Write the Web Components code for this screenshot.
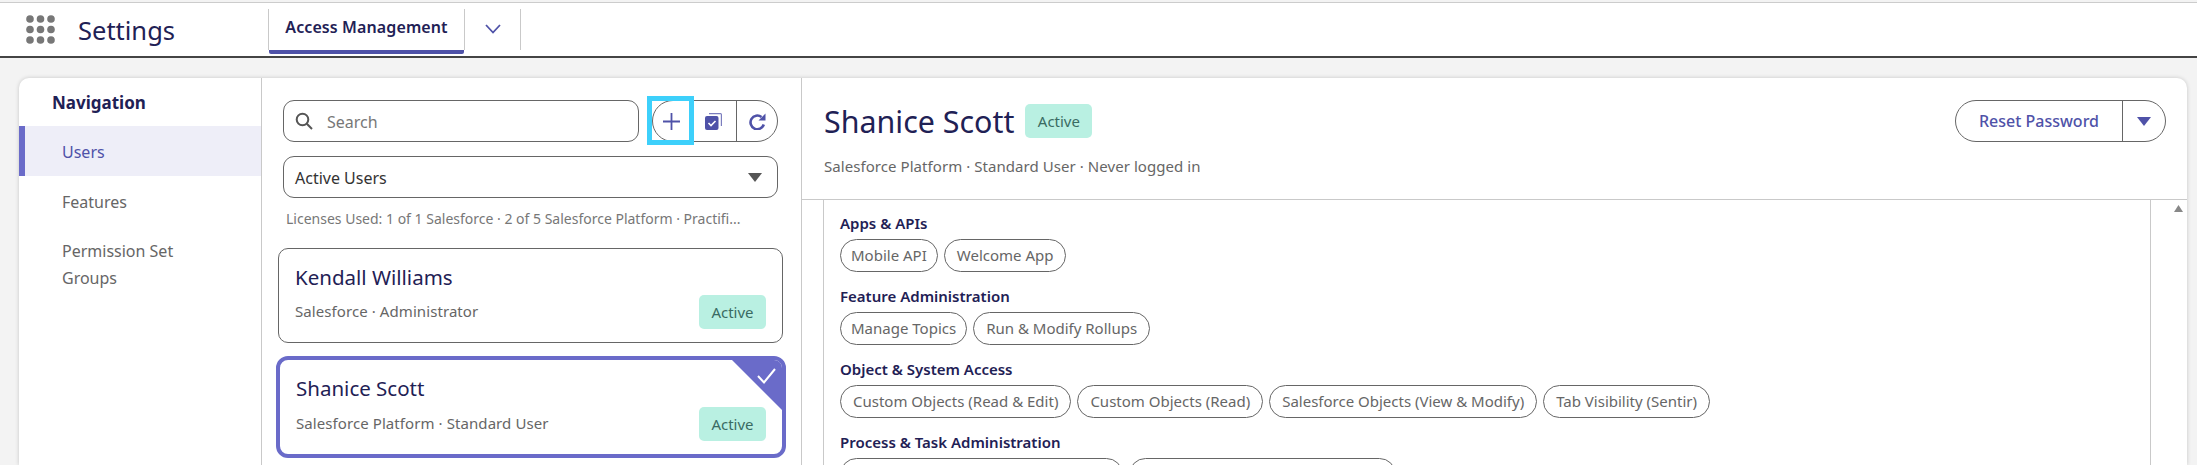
<!DOCTYPE html>
<html>
<head>
<meta charset="utf-8">
<title>Settings</title>
<style>
  html, body { margin: 0; height: 100%; overflow: hidden; }
  body { background: #f3f3f3; font-family: "Noto Sans", sans-serif; color: #1f2155; }
  main { display: flex; height: 387px; margin: 20px 10px 0 19px; background: #fff; border-radius: 10px 10px 0 0; box-shadow: 0 0 4px rgba(0,0,0,.18); overflow: hidden; }
</style>
</head>
<body>
<app-header></app-header>
<main>
  <nav-panel></nav-panel>
  <user-list></user-list>
  <user-detail></user-detail>
</main>

<script>
  const accent = '#4f52a8';

  class AppHeader extends HTMLElement {
    constructor() {
      super();
      this.attachShadow({ mode: 'open' });
      const dots = [];
      for (let r = 0; r < 3; r++) {
        for (let c = 0; c < 3; c++) {
          dots.push(`<circle cx="${4 + c * 10.5}" cy="${4 + r * 10.5}" r="3.8"/>`);
        }
      }
      this.shadowRoot.innerHTML = `
        <style>
          :host { display: flex; height: 53px; margin-top: 2px; align-items: stretch; background: #fff; border-top: 1px solid #ccc; border-bottom: 2px solid #444; box-sizing: content-box; }
          .apps { width: 29px; height: 29px; margin: 12px 0 0 26px; fill: #777; flex: none; }
          .title { margin-left: 23px; width: 95px; font-size: 25.5px; line-height: 55px; color: #1f2155; flex: none; }
          .tabs { display: flex; margin-left: 95px; height: 41px; margin-top: 6px; }
          .tab { width: 197px; box-sizing: border-box; border-left: 1px solid #c9c9c9; border-right: 1px solid #c9c9c9; font-size: 16px; font-weight: 600; letter-spacing: .1px; line-height: 36px; text-align: center; position: relative; }
          .tab::after { content: ''; position: absolute; left: 0; right: 0; bottom: -4px; height: 4px; background: ${accent}; border-radius: 0 0 2px 2px; }
          .more { width: 56px; border-right: 1px solid #c9c9c9; display: flex; align-items: center; justify-content: center; padding-bottom: 1px; box-sizing: border-box; }
        </style>
        <svg class="apps" viewBox="0 0 29 29">${dots.join('')}</svg>
        <div class="title">Settings</div>
        <div class="tabs">
          <div class="tab">Access Management</div>
          <div class="more">
            <svg width="16" height="10" viewBox="0 0 16 10" fill="none" stroke="${accent}" stroke-width="1.8"><path d="M1 1l7 7.5L15 1"/></svg>
          </div>
        </div>
      `;
    }
  }
  customElements.define('app-header', AppHeader);

  class NavPanel extends HTMLElement {
    constructor() {
      super();
      this.attachShadow({ mode: 'open' });
      this.shadowRoot.innerHTML = `
        <style>
          :host { display: block; width: 243px; flex: none; border-right: 1px solid #c9c9c9; box-sizing: border-box; }
          h2 { margin: 0; padding: 13px 0 0 33px; height: 48px; box-sizing: border-box; font-size: 17px; font-weight: 700; line-height: 24px; color: #1f2155; }
          .item { padding: 13px 40px 0 43px; height: 50px; box-sizing: border-box; font-size: 16px; line-height: 27px; color: #666; }
          .item.on { background: #eeeef8; border-left: 6px solid #6a6bc9; padding-left: 37px; color: ${accent}; }
          .item.wide { height: auto; padding-top: 12px; }
        </style>
        <h2>Navigation</h2>
        <div class="item on">Users</div>
        <div class="item">Features</div>
        <div class="item wide">Permission Set Groups</div>
      `;
    }
  }
  customElements.define('nav-panel', NavPanel);

  class StatusBadge extends HTMLElement {
    constructor() {
      super();
      this.attachShadow({ mode: 'open' });
      this.shadowRoot.innerHTML = `
        <style>
          :host { display: block; width: 67px; height: 34px; border-radius: 5px; background: #b9f0e2; color: #3a6b63; font-size: 15px; line-height: 34px; text-align: center; }
        </style>
        <slot></slot>
      `;
    }
  }
  customElements.define('status-badge', StatusBadge);

  class UserCard extends HTMLElement {
    constructor() {
      super();
      this.attachShadow({ mode: 'open' });
      this.shadowRoot.innerHTML = `
        <style>
          :host { display: block; position: relative; height: 95px; margin: 0 -5px; box-sizing: border-box; border: 1px solid #666; border-radius: 10px; padding: 14px 16px 0 16px; overflow: hidden; background: #fff; }
          :host([selected]) { height: 102px; margin: 13px -8px 0 -7px; border: 4px solid #6a6bc9; border-radius: 12px; padding: 14px 16px 0 16px; }
          .name { font-size: 20.5px; line-height: 29px; color: #1f2155; }
          .sub { margin-top: 9px; font-size: 15px; letter-spacing: .08px; line-height: 20px; color: #666; }
          :host([selected]) .sub { margin-top: 10px; }
          status-badge { position: absolute; right: 16px; bottom: 13px; }
          .corner { display: none; position: absolute; top: 0; right: 0; width: 50px; height: 50px; }
          :host([selected]) .corner { display: block; }
        </style>
        <div class="name"><slot name="name"></slot></div>
        <div class="sub"><slot name="sub"></slot></div>
        <status-badge>Active</status-badge>
        <svg class="corner" viewBox="0 0 50 50">
          <path d="M0 0H50V50Z" fill="#6a6bc9"/>
          <path d="M26 16l6 6.5L43 9" fill="none" stroke="#fff" stroke-width="2"/>
        </svg>
      `;
    }
  }
  customElements.define('user-card', UserCard);

  class UserList extends HTMLElement {
    constructor() {
      super();
      this.attachShadow({ mode: 'open' });
      this.shadowRoot.innerHTML = `
        <style>
          :host { display: block; width: 540px; flex: none; padding: 22px 23px 0 21px; box-sizing: border-box; border-right: 1px solid #c9c9c9; }
          .top { display: flex; gap: 13px; height: 42px; }
          .field { box-sizing: border-box; height: 42px; border: 1px solid #666; border-radius: 11px; display: flex; align-items: center; font-size: 16px; color: #333; }
          .field span { padding-top: 2px; }
          .search { width: 356px; flex: none; padding-left: 11px; color: #777; gap: 14px; }
          .group { display: flex; flex: 1; height: 42px; box-sizing: border-box; border: 1px solid #666; border-radius: 21px; }
          .group > div { display: flex; align-items: center; justify-content: center; position: relative; }
          .add { width: 37px; }
          .copy { width: 46px; }
          .refresh { flex: 1; border-left: 1px solid #666; }
          .highlight { position: absolute; left: -6px; top: -5px; width: 47px; height: 49px; box-sizing: border-box; border: 5px solid #3dd0fb; }
          .select { margin-top: 14px; padding: 0 15px 0 11px; justify-content: space-between; }
          .licenses { margin: 11px -8px 19px 3px; font-size: 14px; line-height: 20px; color: #777; white-space: nowrap; }
        </style>
        <div class="top">
          <div class="field search">
            <svg width="18" height="18" viewBox="0 0 18 18" fill="none" stroke="#555" stroke-width="2"><circle cx="7.5" cy="7.5" r="5.8"/><path d="M11.8 11.8L17 17"/></svg>
            <span>Search</span>
          </div>
          <div class="group">
            <div class="add">
              <svg width="17" height="17" viewBox="0 0 17 17" stroke="${accent}" stroke-width="1.8"><path d="M8.5 0v17M0 8.5h17"/></svg>
              <div class="highlight"></div>
            </div>
            <div class="copy">
              <svg width="17" height="18" viewBox="0 0 17 18"><path d="M4 2.5V1h11.5A1.5 1.5 0 0 1 17 2.5V14h-1.2V2.2H4z" fill="${accent}" opacity=".75"/><rect x="0" y="4" width="13.5" height="14" rx="2" fill="${accent}"/><path d="M3.5 11l2.5 2.5 4.5-4.5" fill="none" stroke="#fff" stroke-width="1.6"/></svg>
            </div>
            <div class="refresh">
              <svg width="17" height="18" viewBox="0 0 17 18" fill="none" stroke="${accent}" stroke-width="2.6"><path d="M14.8 12.5A6.8 6.8 0 1 1 12.5 5"/><path d="M9.5 8.5h7V1.5z" fill="${accent}" stroke="none"/></svg>
            </div>
          </div>
        </div>
        <div class="field select">
          <span>Active Users</span>
          <svg width="14" height="9" viewBox="0 0 14 9"><path d="M0 0h14L7 9z" fill="#555"/></svg>
        </div>
        <div class="licenses">Licenses Used: 1 of 1 Salesforce · 2 of 5 Salesforce Platform · Practifi...</div>
        <user-card>
          <span slot="name">Kendall Williams</span>
          <span slot="sub">Salesforce · Administrator</span>
        </user-card>
        <user-card selected>
          <span slot="name">Shanice Scott</span>
          <span slot="sub">Salesforce Platform · Standard User</span>
        </user-card>
      `;
    }
  }
  customElements.define('user-list', UserList);

  class PermSection extends HTMLElement {
    constructor() {
      super();
      this.attachShadow({ mode: 'open' });
      this.shadowRoot.innerHTML = `
        <style>
          :host { display: block; margin-bottom: 14px; }
          h3 { margin: 0 0 6px; font-size: 15px; font-weight: 600; line-height: 20px; color: #1f2155; }
          .pills { display: flex; gap: 6px; }
        </style>
        <h3>${this.getAttribute('label')}</h3>
        <div class="pills"><slot></slot></div>
      `;
    }
  }
  customElements.define('perm-section', PermSection);

  class PermPill extends HTMLElement {
    constructor() {
      super();
      this.attachShadow({ mode: 'open' });
      this.shadowRoot.innerHTML = `
        <style>
          :host { display: block; box-sizing: border-box; height: 33px; border: 1px solid #666; border-radius: 17px; padding: 0 12px; font-size: 15px; line-height: 31px; color: #666; white-space: nowrap; }
        </style>
        <slot></slot>
      `;
    }
  }
  customElements.define('perm-pill', PermPill);

  class UserDetail extends HTMLElement {
    constructor() {
      super();
      this.attachShadow({ mode: 'open' });
      this.shadowRoot.innerHTML = `
        <style>
          :host { display: block; flex: 1; min-width: 0; }
          header { display: flex; justify-content: space-between; height: 122px; box-sizing: border-box; padding: 22px 21px 0 22px; border-bottom: 1px solid #c9c9c9; }
          .head { display: flex; align-items: center; gap: 11px; height: 44px; }
          .head status-badge { margin-top: -3px; }
          h1 { margin: 0; font-size: 30.4px; font-weight: 400; line-height: 44px; color: #1f2155; }
          .sub { margin-top: 12px; font-size: 15px; letter-spacing: .06px; line-height: 20px; color: #666; }
          .split { display: flex; height: 42px; box-sizing: border-box; border: 1px solid #666; border-radius: 21px; color: ${accent}; font-size: 16px; font-weight: 500; }
          .split span { width: 166px; text-align: center; line-height: 40px; border-right: 1px solid #666; }
          .split div { width: 42px; display: flex; align-items: center; justify-content: center; }
          .body { display: flex; height: 265px; }
          .gutter { width: 21px; flex: none; border-right: 1px solid #c9c9c9; }
          .content { flex: 1; padding: 13px 0 0 16px; min-width: 0; border-right: 1px solid #c9c9c9; }
          .bar { width: 36px; flex: none; display: flex; justify-content: flex-end; padding: 5px 4px 0 0; box-sizing: border-box; }
        </style>
        <header>
          <div>
            <div class="head">
              <h1>Shanice Scott</h1>
              <status-badge>Active</status-badge>
            </div>
            <div class="sub">Salesforce Platform · Standard User · Never logged in</div>
          </div>
          <div class="split">
            <span>Reset Password</span>
            <div><svg width="14" height="9" viewBox="0 0 14 9"><path d="M0 0h14L7 9z" fill="${accent}"/></svg></div>
          </div>
        </header>
        <div class="body">
          <div class="gutter"></div>
          <div class="content">
            <perm-section label="Apps &amp; APIs">
              <perm-pill style="padding:0 10px">Mobile API</perm-pill>
              <perm-pill>Welcome App</perm-pill>
            </perm-section>
            <perm-section label="Feature Administration">
              <perm-pill style="padding:0 10px">Manage Topics</perm-pill>
              <perm-pill>Run &amp; Modify Rollups</perm-pill>
            </perm-section>
            <perm-section label="Object &amp; System Access">
              <perm-pill>Custom Objects (Read &amp; Edit)</perm-pill>
              <perm-pill>Custom Objects (Read)</perm-pill>
              <perm-pill>Salesforce Objects (View &amp; Modify)</perm-pill>
              <perm-pill>Tab Visibility (Sentir)</perm-pill>
            </perm-section>
            <perm-section label="Process &amp; Task Administration">
              <perm-pill style="width:283px"></perm-pill>
              <perm-pill style="width:267px"></perm-pill>
            </perm-section>
          </div>
          <div class="bar">
            <svg width="9" height="7" viewBox="0 0 9 7"><path d="M0 7L4.5 0 9 7z" fill="#888"/></svg>
          </div>
        </div>
      `;
    }
  }
  customElements.define('user-detail', UserDetail);
</script>
</body>
</html>
